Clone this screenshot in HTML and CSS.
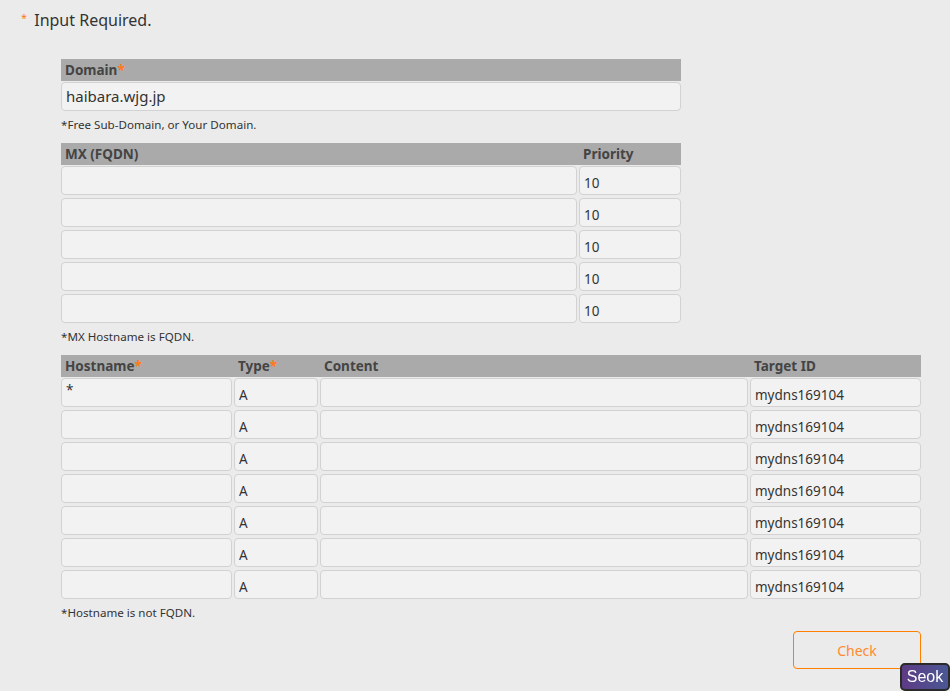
FILE: index.html
```html
<!DOCTYPE html>
<html lang="ja">
<head>
<meta charset="utf-8">
<title>MyDNS</title>
<link rel="stylesheet" href="styles.css">
</head>
<body>
<p class="required"><span class="req">*</span> Input Required.</p>
<div class="form">
  <section class="sec">
    <div class="head cols-domain"><div>Domain<span class="req">*</span></div></div>
    <div class="rows cols-domain">
      <input class="cell big" value="haibara.wjg.jp">
    </div>
    <p class="note">*Free Sub-Domain, or Your Domain.</p>
  </section>

  <section class="sec">
    <div class="head cols-mx"><div>MX (FQDN)</div><div>Priority</div></div>
    <div class="rows cols-mx">
      <input class="cell" value=""><input class="cell low" value="10">
      <input class="cell" value=""><input class="cell low" value="10">
      <input class="cell" value=""><input class="cell low" value="10">
      <input class="cell" value=""><input class="cell low" value="10">
      <input class="cell" value=""><input class="cell low" value="10">
    </div>
    <p class="note">*MX Hostname is FQDN.</p>
  </section>

  <section class="sec wide">
    <div class="head cols-host"><div>Hostname<span class="req">*</span></div><div>Type<span class="req">*</span></div><div>Content</div><div>Target ID</div></div>
    <div class="rows cols-host">
      <input class="cell star" value="*"><input class="cell low" value="A"><input class="cell" value=""><input class="cell low" value="mydns169104">
      <input class="cell" value=""><input class="cell low" value="A"><input class="cell" value=""><input class="cell low" value="mydns169104">
      <input class="cell" value=""><input class="cell low" value="A"><input class="cell" value=""><input class="cell low" value="mydns169104">
      <input class="cell" value=""><input class="cell low" value="A"><input class="cell" value=""><input class="cell low" value="mydns169104">
      <input class="cell" value=""><input class="cell low" value="A"><input class="cell" value=""><input class="cell low" value="mydns169104">
      <input class="cell" value=""><input class="cell low" value="A"><input class="cell" value=""><input class="cell low" value="mydns169104">
      <input class="cell" value=""><input class="cell low" value="A"><input class="cell" value=""><input class="cell low" value="mydns169104">
    </div>
    <p class="note">*Hostname is not FQDN.</p>
  </section>

  <div class="actions"><button class="check" type="button">Check</button></div>
</div>
<div class="badge">Seok</div>
</body>
</html>
```

FILE: styles.css
```css
html, body {
  margin: 0;
  padding: 0;
}
body {
  background: #ebebeb;
  font-family: "Noto Sans", "Open Sans", "Liberation Sans", sans-serif;
  color: #333;
  width: 950px;
  height: 691px;
  overflow: hidden;
}
.required {
  margin: 0;
  padding: 8px 0 0 21px;
  font-size: 16px;
  line-height: 20px;
  color: #333;
}
.req {
  color: #ff7a1a;
}
.required .req {
  font-size: 11px;
  vertical-align: 4px;
  margin-right: 3px;
}
.form {
  margin: 29px 0 0 61px;
  width: 860px;
}
.sec {
  width: 620px;
}
.sec.wide {
  width: 860px;
}
.head {
  display: grid;
  column-gap: 2px;
  height: 22px;
  background: #aaaaaa;
  font-size: 13.5px;
  font-weight: bold;
  line-height: 22px;
  color: #444;
}
.head > div {
  padding-left: 4px;
  white-space: nowrap;
}
.rows {
  display: grid;
  column-gap: 2px;
  row-gap: 3px;
  margin-top: 1px;
}
.cols-domain { grid-template-columns: 620px; }
.cols-mx { grid-template-columns: 516px 102px; }
.cols-host { grid-template-columns: 171px 84px 428px 171px; }
.cell {
  box-sizing: border-box;
  height: 29px;
  width: 100%;
  margin: 0;
  border: 1px solid #d2d2d2;
  border-radius: 4px;
  background: #f2f2f2;
  font-family: "Noto Sans", "Open Sans", "Liberation Sans", sans-serif;
  font-size: 13.5px;
  color: #333;
  padding: 0 4px;
  outline: none;
}
.cell.big {
  font-size: 15px;
  padding-bottom: 2px;
}
.cell.low {
  padding-top: 5px;
}
.cell.star {
  padding-bottom: 5px;
}
.note {
  margin: 6px 0 10px;
  font-size: 11.6px;
  line-height: 16px;
  color: #333;
}
.actions {
  display: flex;
  justify-content: flex-end;
}
.check {
  width: 128px;
  height: 38px;
  border: 1px solid #ff8000;
  border-radius: 4px;
  background: transparent;
  color: #ff8a2e;
  font-family: "Noto Sans", "Open Sans", "Liberation Sans", sans-serif;
  font-size: 14px;
  padding: 0;
}
.badge {
  position: fixed;
  right: 0;
  bottom: 0;
  box-sizing: border-box;
  width: 50px;
  height: 28px;
  border: 2px solid #2a2a2a;
  border-radius: 5px;
  background: linear-gradient(90deg, #5d3b85, #4a5894);
  color: #fff;
  font-family: "Liberation Sans", sans-serif;
  font-size: 16px;
  line-height: 24px;
  text-align: center;
}
```
